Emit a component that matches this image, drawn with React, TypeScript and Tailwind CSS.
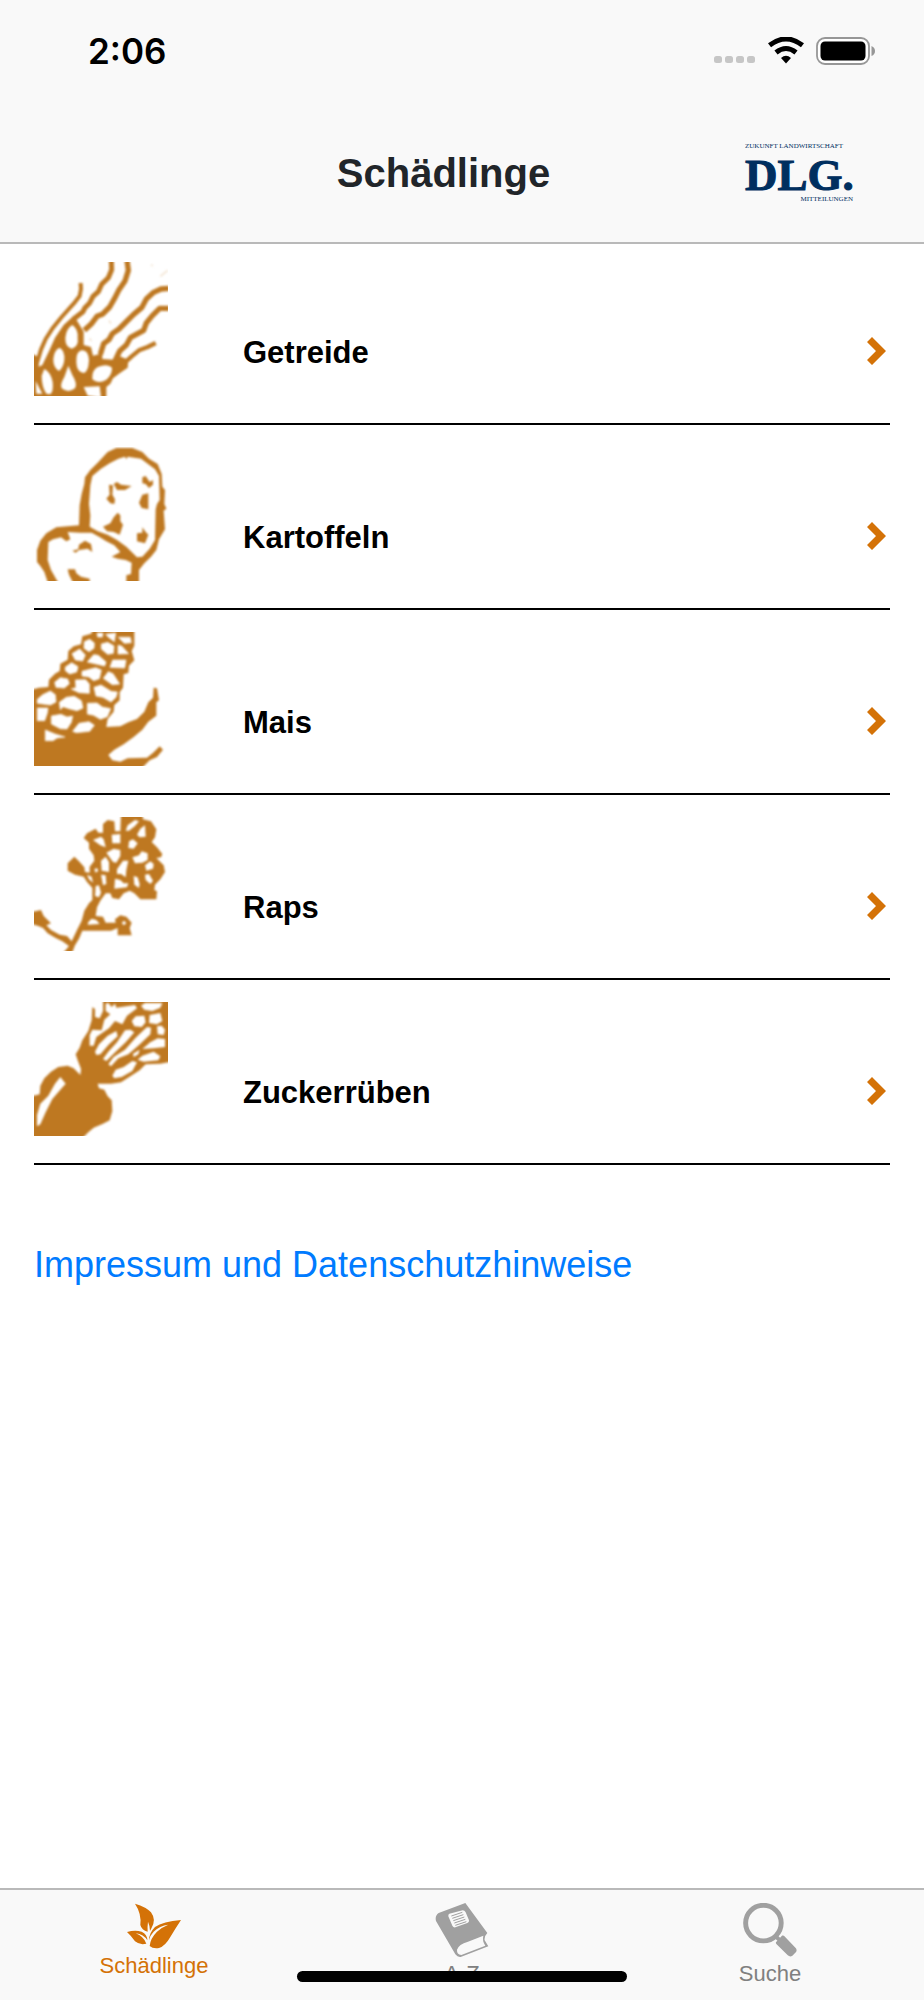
import React from "react";

// crop drawings have soft, slightly rounded edges
const CropDrawing = ({ id, children }: { id: string; children: React.ReactNode }) => (
  <svg viewBox="41 35 402 402" className="w-[134px] h-[134px] shrink-0" fill="#be7821" aria-hidden="true">
    <filter id={id} x="-10%" y="-10%" width="120%" height="120%" colorInterpolationFilters="sRGB">
      <feGaussianBlur stdDeviation="2.500" />
    </filter>
    <g filter={`url(#${id})`}>{children}</g>
  </svg>
);

const GetreideIcon = () => (
  <CropDrawing id="getreide">
    <g fill="none" stroke="#be7821" strokeWidth="12" strokeLinejoin="round">
      <path d="M181 98 L182 116 L178 137 L160 160 L124 200 L98 232 L76 266 L62 298 L50 338 L46 380" />
      <path strokeWidth="15" d="M273 30 L274 58 L264 82 L244 102 L234 124 L218 138 L208 158 L194 172 L188 184 L160 206" />
      <path strokeWidth="16" d="M320 30 L324 60 L314 92 L296 118 L284 142 L268 170 L246 192 L230 198 L212 222 L192 240" />
      <path strokeWidth="16" d="M446 114 L422 116 L400 126 L378 146 L364 172 L340 192 L320 212 L296 236 L276 250 L266 268 L250 280 L240 312" />
      <path strokeWidth="16" d="M446 174 L418 174 L396 196 L378 218 L370 240 L352 250 L330 262 L318 284 L298 302 L284 332" />
      <path strokeWidth="13" d="M406 278 L382 290 L356 300 L334 318 L310 340 L286 354" />
    </g>
    <path d="M160 196 L130 224 L104 262 L88 298 L66 344 L54 350 L50 318 L34 310 L34 446 L258 446 L258 410 L270 400 L278 384 L296 370 L322 352 L324 328 L298 318 L282 328 L246 326 L246 290 L236 312 L218 316 L212 290 L190 284 L190 244 L172 214 Z" />
    <g fill="#fff">
      <path d="M156 224 Q174 236 172 262 Q176 288 154 295 Q134 290 135 262 Q138 234 156 224 Z" />
      <path d="M118 292 Q134 302 132 328 Q130 350 116 362 Q98 352 99 326 Q102 298 118 292 Z" />
      <path d="M184 300 Q204 298 206 330 Q204 366 190 368 Q169 366 168 336 Q166 304 184 300 Z" />
      <path d="M72 356 Q92 366 97 396 Q100 424 90 432 L78 430 Q64 410 64 376 Z" />
      <path d="M144 346 L156 374 Q172 400 164 414 Q144 430 124 414 Q118 404 132 380 Z" />
      <path d="M232 350 Q262 338 275 352 Q276 372 258 388 Q234 402 216 387 Q214 360 232 350 Z" />
      <path d="M190 410 L238 408 L242 442 L202 436 Z" />
      <path d="M46 392 L66 430 L48 430 Z" />
    </g>
    <path stroke="#f3e4d1" strokeWidth="5" fill="none" d="M420 78 L442 60 M392 44 L398 46 M266 210 L272 220 M208 264 L213 272" />
  </CropDrawing>
);

const KartoffelIcon = () => (
  <CropDrawing id="kartoffeln">
    <path
      fillRule="evenodd"
      d="M176 270 L178 210 L184 176 L192 146 L194 126 L210 104 L232 82 L262 50 L288 38 L336 38 L366 50 L386 70 L412 86 L424 116 L426 154 L434 164 L432 206 L438 220 L430 226 L434 282 L416 312 L408 344 L392 364 L372 384 L356 404 L356 446 L318 446 L318 420 L332 416 L334 382 L316 374 L292 370 L274 364 L300 350 L282 330 L258 318 L236 304 L214 292 L180 292 L142 290 L150 312 L138 318 L122 306 L98 312 L84 320 L82 374 L92 404 L116 446 L84 446 L72 410 L60 392 L50 380 L50 344 L60 316 L78 294 L108 276 Z M208 274 L232 288 L262 298 L290 314 L318 334 L350 366 L366 364 L388 340 L404 314 L406 222 L410 206 L418 194 L416 122 L404 102 L380 84 L362 70 L322 64 L318 72 L314 64 L294 70 L268 84 L242 100 L216 122 L210 150 L206 206 L210 240 Z"
    />
    <path d="M266 148 L278 150 L276 178 L284 192 L282 206 L270 204 L258 190 L268 178 Z" />
    <path d="M280 146 L290 140 L302 148 L334 152 L314 164 L290 164 Z" />
    <path d="M366 126 L376 122 L388 140 L398 134 L398 148 L386 158 L376 146 L366 144 Z" />
    <path d="M366 178 L384 174 L384 222 L364 218 L356 202 Z" />
    <path d="M292 232 L300 240 L300 258 L308 268 L298 298 L280 290 L260 288 L248 274 L270 264 L280 246 Z" />
    <path d="M366 276 L376 290 L384 298 L374 324 L350 318 L350 294 L366 292 Z" />
    <path d="M156 346 L174 342 L176 328 L194 316 L212 326 L216 350 L202 340 L176 344 L166 352 Z" />
    <path d="M142 402 L164 402 L168 414 L182 424 L208 430 L208 446 L160 446 L146 418 Z" />
  </CropDrawing>
);

const MaisIcon = () => (
  <CropDrawing id="mais">
    <path d="M34 208 L56 202 L84 200 L86 178 L104 160 L118 152 L120 130 L142 118 L144 92 L160 78 L182 72 L186 48 L212 40 L220 26 L342 26 L342 76 L334 92 L342 120 L326 136 L324 158 L310 162 L308 202 L298 216 L298 240 L282 254 L280 274 L262 296 L258 320 L300 318 L324 306 L350 296 L372 274 L384 246 L398 232 L400 202 L410 204 L416 240 L408 246 L408 286 L384 304 L366 328 L340 350 L310 372 L282 388 L264 404 L276 420 L300 424 L322 414 L380 412 L400 396 L418 378 L428 388 L410 410 L388 420 L362 446 L34 446 Z" />
    <g fill="#fff" stroke="#fff" strokeWidth="2" strokeLinejoin="round">
      <path d="M192 64 L208 57 L222 68 L221 84 L206 94 L191 84 Z" />
      <path d="M230 38 L248 38 L246 50 L232 50 Z" />
      <path d="M243 71 L262 66 L281 77 L279 99 L262 102 L243 86 Z" />
      <path d="M256 42 L286 38 L282 64 L266 52 Z" />
      <path d="M294 51 L330 51 L333 67 L312 69 Z" />
      <path d="M293 75 L304 77 L325 100 L293 101 Z" />
      <path d="M155 100 L178 86 L195 104 L187 122 L165 119 Z" />
      <path d="M220 103 L234 105 L257 125 L253 137 L201 125 Z" />
      <path d="M277 119 L317 119 L313 143 L269 141 Z" />
      <path d="M135 140 L154 127 L173 139 L169 155 L148 161 L135 151 Z" />
      <path d="M185 153 L226 142 L243 149 L237 175 L220 181 L206 170 L185 167 Z" />
      <path d="M249 174 L264 154 L278 160 L298 191 L276 193 Z" />
      <path d="M103 186 L120 172 L142 176 L147 190 L132 203 L107 201 Z" />
      <path d="M165 179 L196 178 L207 191 L207 219 L176 217 L153 206 L167 202 Z" />
      <path d="M221 201 L242 194 L272 213 L291 215 L287 231 L272 245 L248 231 L227 227 Z" />
      <path d="M67 223 L90 212 L105 223 L107 245 L90 254 L51 249 L51 237 Z" />
      <path d="M117 246 L138 231 L162 228 L183 241 L188 263 L170 271 L146 265 L128 259 L120 268 Z" />
      <path d="M201 249 L230 248 L246 260 L271 265 L261 289 L240 297 L220 285 L201 281 Z" />
      <path d="M51 263 L83 263 L81 278 L73 301 L51 301 Z" />
      <path d="M93 287 L122 282 L140 290 L157 287 L153 306 L140 326 L120 325 L93 311 Z" />
      <path d="M157 333 L176 309 L206 304 L222 315 L208 333 L168 337 Z" />
      <path d="M75 329 L104 341 L134 350 L110 353 L98 361 L75 361 Z" />
    </g>
  </CropDrawing>
);

const RapsIcon = () => (
  <CropDrawing id="raps">
    <path d="M248 56 L262 44 L282 48 L284 78 L300 78 L302 26 L366 26 L368 42 L392 48 L408 72 L404 96 L394 110 L410 126 L426 146 L422 156 L408 158 L430 180 L434 200 L420 222 L404 238 L402 254 L410 258 L408 282 L360 282 L342 264 L328 256 L310 264 L296 282 L276 278 L270 264 L256 264 L240 286 L230 306 L226 332 L248 334 L256 352 L286 352 L284 342 L300 330 L318 334 L334 352 L328 368 L334 390 L292 390 L292 368 L272 376 L186 376 L176 400 L164 420 L154 446 L126 446 L146 422 L126 408 L106 398 L82 384 L68 368 L54 362 L34 356 L34 320 L62 314 L70 332 L92 354 L78 360 L92 374 L118 388 L140 392 L154 408 L170 374 L184 346 L192 316 L206 294 L216 284 L216 248 L200 230 L190 214 L164 208 L142 196 L142 174 L162 154 L176 168 L192 186 L194 200 L208 202 L208 184 L222 166 L220 150 L206 130 L206 112 L190 98 L200 84 L226 70 L234 82 L248 82 Z" />
    <g fill="#fff">
      <path d="M316 76 L322 60 L344 44 L356 48 L344 62 L326 76 Z" />
      <path d="M350 88 L360 70 L374 60 L376 94 L358 96 Z" />
      <path d="M274 88 L300 86 L300 114 L276 114 Z" />
      <path d="M218 104 L242 94 L250 102 L256 126 L240 120 Z" />
      <path d="M326 108 L338 102 L352 114 L340 130 L324 128 Z" />
      <path d="M258 142 L280 130 L300 134 L300 152 L288 172 L278 170 Z" />
      <path d="M336 156 L356 150 L364 138 L382 144 L382 164 L366 172 L344 174 Z" />
      <path d="M242 166 L256 154 L266 170 L266 200 L244 196 Z" />
      <path d="M290 192 L308 166 L324 166 L318 194 L316 216 L302 206 L290 206 Z" />
      <path d="M374 180 L390 168 L400 176 L398 190 L378 196 Z" />
      <path d="M374 208 L386 206 L398 226 L390 236 L376 224 Z" />
      <path d="M284 220 L300 224 L310 234 L324 234 L320 246 L282 250 Z" />
      <path d="M340 212 L352 216 L358 236 L356 248 L342 238 Z" />
      <path d="M222 192 L230 188 L234 196 L226 202 Z M200 208 L214 214 L218 232 L206 222 Z M242 208 L256 210 L258 236 L248 240 Z" />
      <path d="M226 242 L236 240 L242 262 L236 276 L224 272 Z" />
      <path d="M204 350 L214 340 L228 344 L238 356 L202 358 Z" />
      <path d="M304 352 L312 346 L318 354 L310 360 Z" />
    </g>
  </CropDrawing>
);

const RuebenIcon = () => (
  <CropDrawing id="rueben">
    <path d="M216 50 L224 56 L234 26 L452 26 L452 214 L420 220 L376 222 L358 240 L330 258 L302 276 L272 280 L232 280 L236 294 L252 298 L262 318 L274 330 L276 362 L268 390 L248 400 L220 412 L204 426 L184 446 L34 446 L34 318 L58 312 L60 286 L72 264 L92 244 L114 230 L142 226 L160 234 L180 254 L182 236 L172 210 L166 192 L178 172 L186 150 L204 122 L214 90 Z" />
    <g fill="#fff">
      <path d="M214 26 L248 26 L248 62 L238 84 L224 80 L224 54 L216 50 Z" />
      <path d="M256 40 L264 38 L274 50 L284 40 L288 52 L344 44 L350 54 L320 76 L306 102 L284 92 L266 114 L228 140 L220 166 L208 166 L208 134 L216 118 L244 120 L252 88 L270 72 L256 62 Z" />
      <path d="M362 46 L374 38 L426 38 L420 52 L396 62 L372 58 Z" />
      <path d="M334 92 L346 78 L372 76 L376 96 L364 110 L342 108 Z" />
      <path d="M388 74 L420 68 L426 92 L410 102 L386 98 Z" />
      <path d="M410 108 L424 106 L434 118 L430 134 L412 132 Z" />
      <path d="M224 184 L236 162 L262 136 L288 122 L292 138 L266 162 L240 192 L228 194 Z" />
      <path d="M248 206 L264 184 L290 156 L314 120 L330 118 L342 126 L316 156 L286 184 L258 212 Z" />
      <path d="M264 222 L280 200 L314 178 L346 142 L380 110 L392 112 L390 132 L356 164 L324 192 L294 204 L272 228 Z" />
      <path d="M366 176 L390 156 L412 144 L434 146 L434 170 L400 174 Z" />
      <path d="M352 208 L366 196 L400 184 L420 198 L414 210 L370 214 Z" />
      <path d="M338 190 L358 178 L354 192 L340 200 Z" />
      <path d="M276 256 L286 238 L310 230 L336 212 L350 216 L336 242 L304 260 L282 264 Z" />
      <path d="M50 374 L60 340 L84 316 L104 280 L120 260 L136 280 L120 298 L96 326 L76 366 L60 402 L50 408 Z" />
    </g>
  </CropDrawing>
);

const StatusBar = () => (
  <div className="flex items-center justify-between pl-[88px] pr-12 pt-[26px]">
    <div className="font-[Inter,sans-serif] text-[35px] leading-[50px] font-semibold text-black">2:06</div>
    <div className="flex items-center gap-3">
      <svg width="42" height="28" viewBox="0 0 42 28" fill="#c6c6c6" aria-hidden="true">
        <rect x="0" y="19" width="8" height="7" rx="2.5" />
        <rect x="11" y="19" width="8" height="7" rx="2.5" />
        <rect x="22" y="19" width="8" height="7" rx="2.5" />
        <rect x="33" y="19" width="8" height="7" rx="2.5" />
      </svg>
      <svg width="36" height="28" viewBox="0 0 36 28" fill="none" stroke="#000" aria-hidden="true">
        <path d="M1.5 8.3 Q18 -4.4 34.5 8.3" strokeWidth="5" />
        <path d="M8 15.5 Q18 7.5 28 15.5" strokeWidth="5" />
        <path d="M13 21 Q18 16.5 23 21 L18 26.5 Z" fill="#000" stroke="none" />
      </svg>
      <svg width="60" height="28" viewBox="0 0 60 28" aria-hidden="true">
        <rect x="1" y="1" width="52" height="26" rx="8" fill="#fff" stroke="#979797" strokeWidth="1.8" />
        <rect x="4.5" y="4.5" width="45" height="19" rx="4.5" fill="#000" />
        <path d="M55.5 9 Q59 10.5 59 14 Q59 17.5 55.5 19 Z" fill="#979797" />
      </svg>
    </div>
  </div>
);

const DlgLogo = () => (
  <svg
    width="108"
    height="62"
    viewBox="0 0 108 62"
    className="overflow-visible font-['Liberation_Serif',serif]"
    fill="#002f5f"
    role="img"
    aria-label="DLG Mitteilungen"
  >
    <text x="0" y="6" fontSize="7">ZUKUNFT LANDWIRTSCHAFT</text>
    <text x="0" y="48" fontSize="45" fontWeight="bold" stroke="#002f5f" strokeWidth="1">DLG.</text>
    <text x="108" y="59" fontSize="7" textAnchor="end">MITTEILUNGEN</text>
  </svg>
);

const LeafIcon = () => (
  <svg width="54" height="46" viewBox="140 67 162 136" fill="#d47207" aria-hidden="true">
    <path d="M164 68 Q198 78 212 94 Q228 116 214 140 L209 150 Q208 132 203 122 Q201 136 202 152 Q184 148 180 132 Q184 98 164 68 Z" />
    <path d="M302 117 Q288 138 270 168 Q254 196 236 201 Q218 204 208 195 Q210 172 230 152 Q246 138 264 131 Q238 134 220 152 Q208 164 206 178 Q206 156 224 138 Q248 122 302 117 Z" />
    <path d="M140 153 Q164 146 184 152 Q201 160 201 178 Q190 160 166 157 Q190 166 198 188 Q178 193 164 181 Q154 166 140 153 Z" />
  </svg>
);

const BookIcon = () => (
  <svg width="54" height="54" viewBox="105 68 162 162" aria-hidden="true">
    <path
      fill="#a0a0a0"
      d="M196 68 L262 158 Q252 168 254 180 L265 198 L184 229 Q174 232 166 222 L108 122 Q104 106 116 98 Z"
    />
    <path fill="#f9f9f9" d="M171 208 Q176 192 204 184 L250 166 Q246 182 256 196 L184 224 Q170 222 171 208 Z" />
    <path fill="#f9f9f9" d="M148 100 L188 90 Q194 90 197 96 L207 120 Q208 126 202 128 L166 141 Q160 142 157 136 L145 108 Q144 102 148 100 Z" />
    <path stroke="#a0a0a0" strokeWidth="3" d="M154 107 L187 96 M157 114 L190 103 M160 121 L193 110 M163 128 L196 117 M166 135 L199 124" />
  </svg>
);

const SearchIcon = () => (
  <svg width="54" height="54" viewBox="126 67 164 164" aria-hidden="true">
    <circle cx="188" cy="128" r="54" fill="none" stroke="#a0a0a0" strokeWidth="15" />
    <path stroke="#a0a0a0" strokeWidth="12" d="M222 166 L238 180" />
    <path
      fill="#a0a0a0"
      d="M226 186 L245 166 Q250 165 254 170 L286 204 Q291 210 287 216 L276 227 Q269 232 262 226 L228 192 Q225 189 226 186 Z"
    />
  </svg>
);

const crops = [
  { name: "Getreide", Icon: GetreideIcon },
  { name: "Kartoffeln", Icon: KartoffelIcon },
  { name: "Mais", Icon: MaisIcon },
  { name: "Raps", Icon: RapsIcon },
  { name: "Zuckerrüben", Icon: RuebenIcon },
];

const App = () => {
  return (
    <div className="min-h-screen flex flex-col bg-white font-['Liberation_Sans',Arial,sans-serif]">
      <header className="bg-[#f9f9f9] border-b-2 border-[#b9b9b9]">
        <StatusBar />
        <div className="grid grid-cols-3 items-center pl-[34px] pr-[71px] pt-[66px] pb-[38px]">
          <h1 className="col-start-2 text-center text-[40px] leading-[62px] font-bold text-[#212529]">Schädlinge</h1>
          <a href="#dlg" className="justify-self-end">
            <DlgLogo />
          </a>
        </div>
      </header>

      <main className="grow px-[34px] pt-[18px]">
        <ul className="flex flex-col gap-[22px]">
          {crops.map(({ name, Icon }) => (
            <li key={name} className="border-b-2 border-black">
              <a href={`#${name}`} className="flex items-end pb-[27px]">
                <Icon />
                <span className="grow pl-[75px] pb-[19px] text-[31px] leading-[48px] font-bold text-black">{name}</span>
                <svg width="19" height="28" viewBox="0 0 19 28" className="mr-1 mb-[31px]" fill="#d47207" aria-hidden="true">
                  <path d="M5 0 L19 14 L5 28 L0 23 L9 14 L0 5 Z" />
                </svg>
              </a>
            </li>
          ))}
        </ul>
        <a href="#impressum" className="inline-block mt-[73px] text-[36px] leading-[54px] text-[#007bff]">
          Impressum und Datenschutzhinweise
        </a>
      </main>

      <nav className="relative grid grid-cols-3 h-28 bg-[#f9f9f9] border-t-2 border-[#b9b9b9] text-[22px] leading-[26px] text-[#808080]">
        <a href="#schaedlinge" className="flex flex-col items-center gap-1 pt-[13px] text-[#d47207]">
          <LeafIcon />
          Schädlinge
        </a>
        <a href="#a-z" className="flex flex-col items-center gap-1 pt-[13px]">
          <BookIcon />
          A-Z
        </a>
        <a href="#suche" className="flex flex-col items-center gap-1 pt-[13px]">
          <SearchIcon />
          Suche
        </a>
        {/* home indicator lies over the tab labels */}
        <div className="absolute bottom-[18px] left-1/2 -translate-x-1/2 w-[330px] h-[11px] rounded-full bg-black" />
      </nav>
    </div>
  );
};

export default App;
